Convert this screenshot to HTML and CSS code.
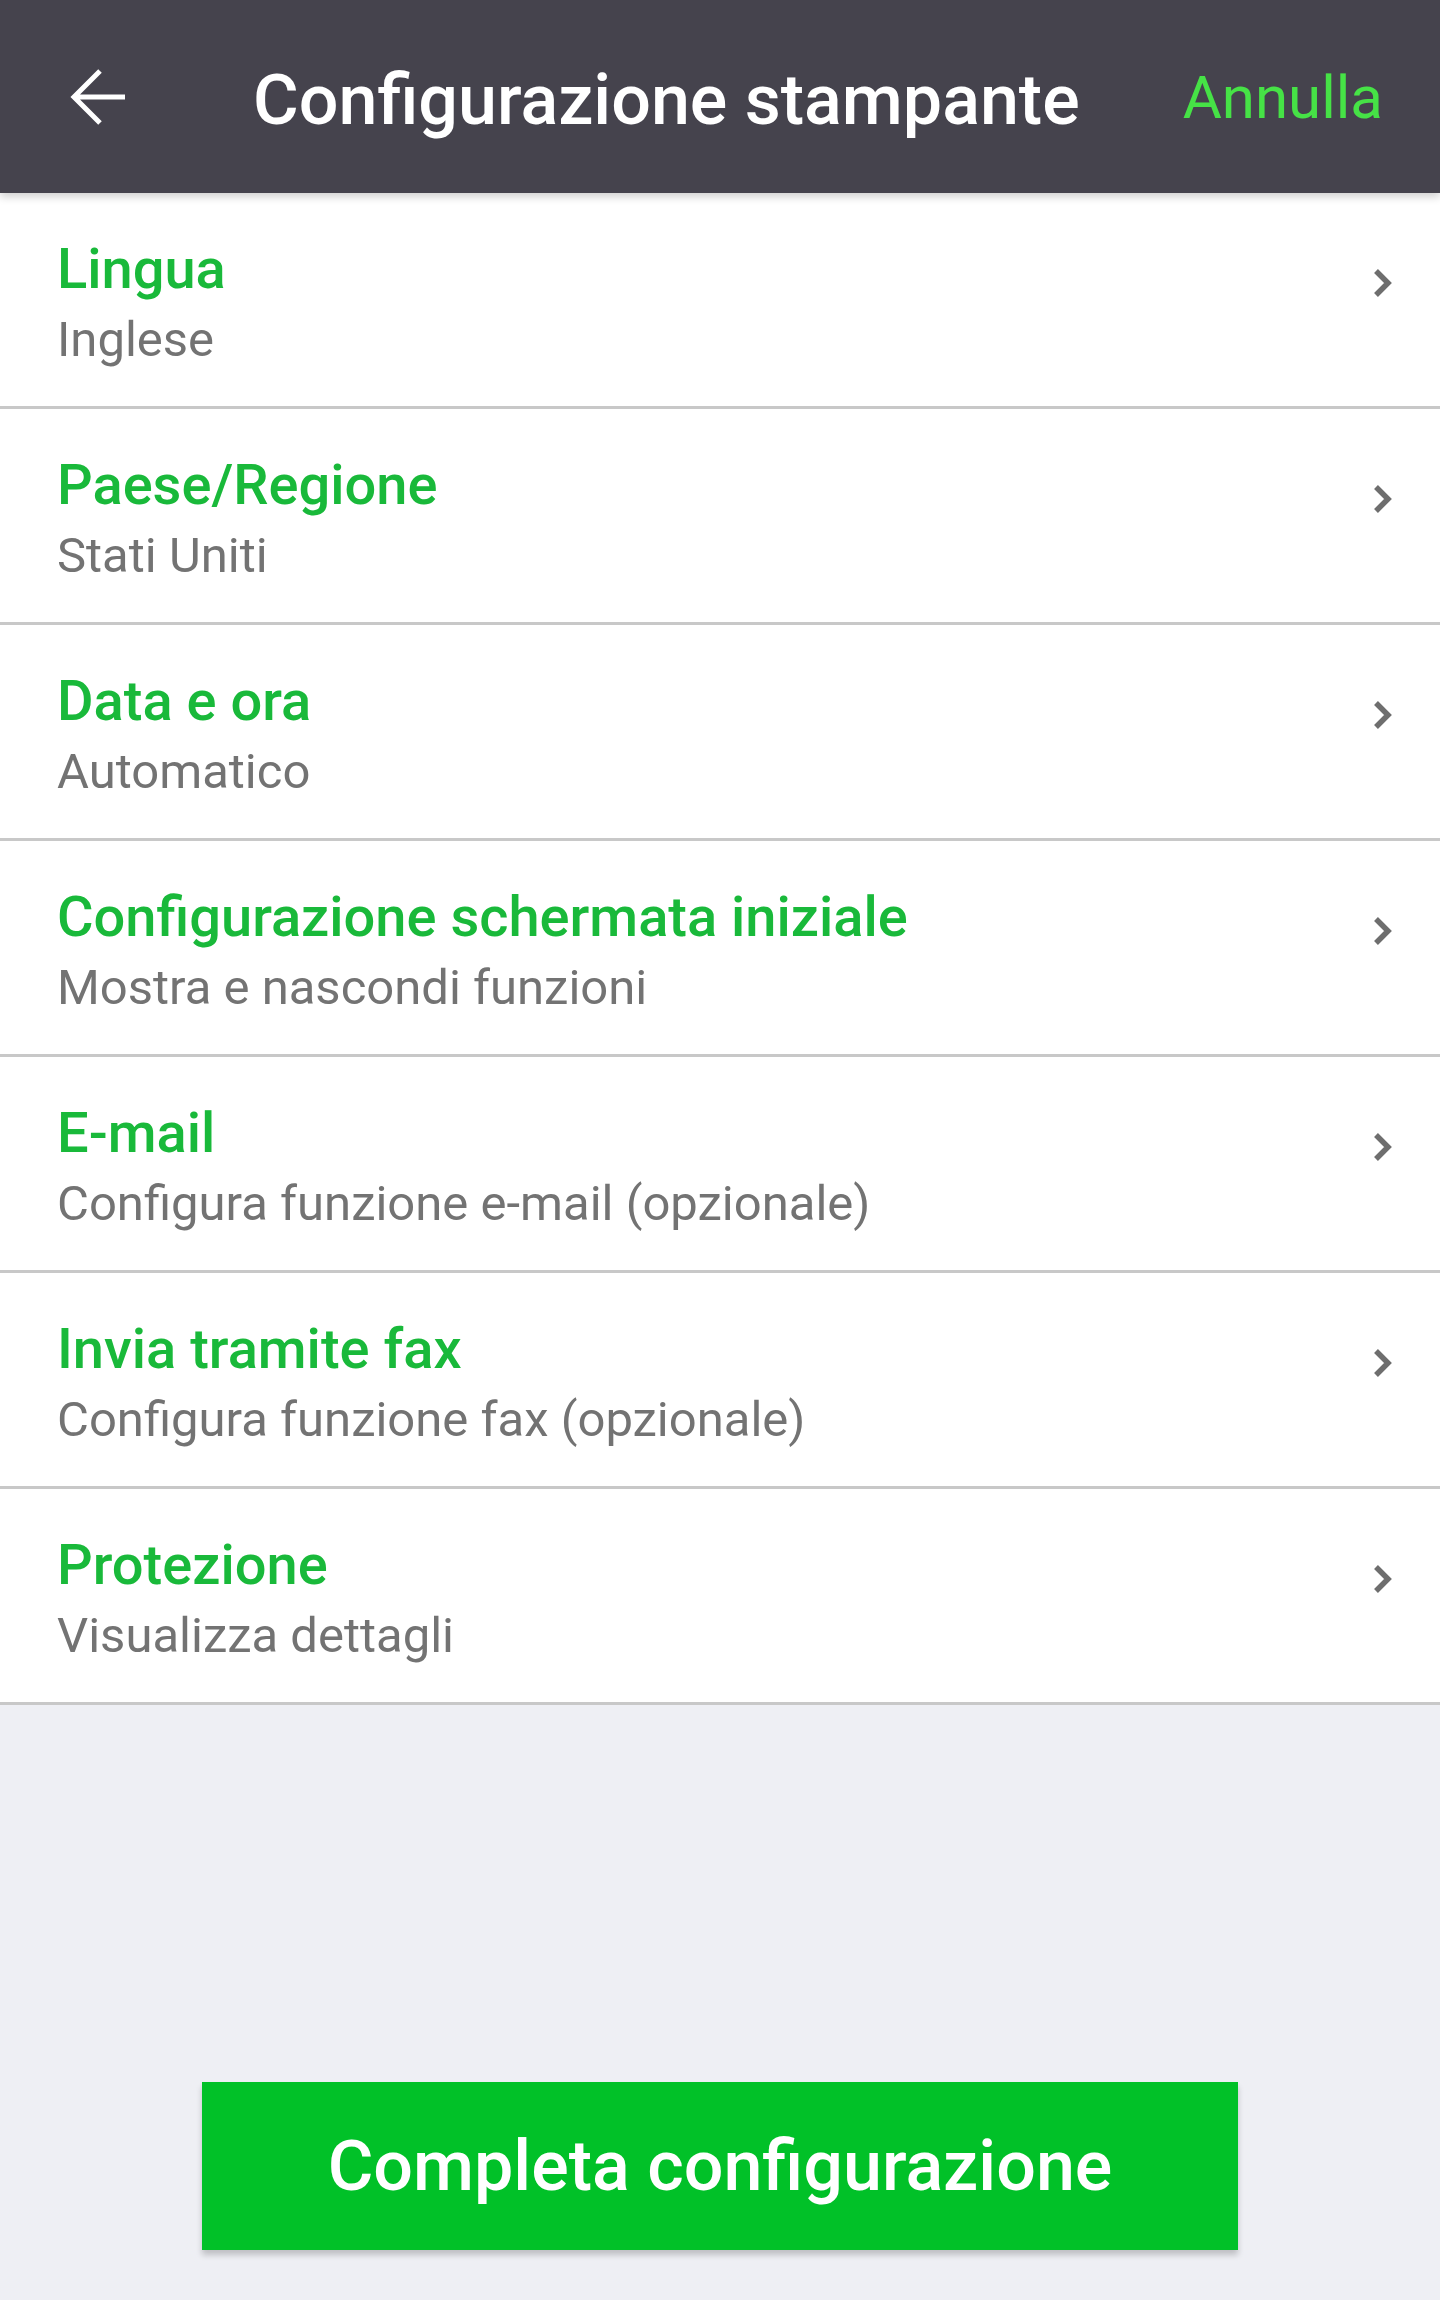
FILE: index.html
```html
<!DOCTYPE html>
<html lang="it">

<head>
    <meta charset="UTF-8">
    <meta name="viewport" content="width=device-width, initial-scale=1.0">
    <title>Configurazione stampante</title>
    <link rel="stylesheet" href="styles.css">
</head>

<body>
    <div class="page">
        <header class="topbar">
            <button class="back" type="button" aria-label="Indietro">
                <svg width="56" height="56" viewBox="0 0 56 56">
                    <path d="M55 28H4 M30 2 L4 28 L30 54" fill="none" stroke="#fff" stroke-width="5" />
                </svg>
            </button>
            <h1 class="title">Configurazione stampante</h1>
            <a class="cancel" href="#">Annulla</a>
        </header>

        <ul class="settings">
            <li class="item">
                <div class="text">
                    <div class="name">Lingua</div>
                    <div class="value">Inglese</div>
                </div>
                <svg class="chevron" width="22" height="32" viewBox="0 0 22 32">
                    <polyline points="4,3 16,15 4,27" fill="none" stroke="#6e6e6e" stroke-width="5.5" />
                </svg>
            </li>
            <li class="item">
                <div class="text">
                    <div class="name">Paese/Regione</div>
                    <div class="value">Stati Uniti</div>
                </div>
                <svg class="chevron" width="22" height="32" viewBox="0 0 22 32">
                    <polyline points="4,3 16,15 4,27" fill="none" stroke="#6e6e6e" stroke-width="5.5" />
                </svg>
            </li>
            <li class="item">
                <div class="text">
                    <div class="name">Data e ora</div>
                    <div class="value">Automatico</div>
                </div>
                <svg class="chevron" width="22" height="32" viewBox="0 0 22 32">
                    <polyline points="4,3 16,15 4,27" fill="none" stroke="#6e6e6e" stroke-width="5.5" />
                </svg>
            </li>
            <li class="item">
                <div class="text">
                    <div class="name">Configurazione schermata iniziale</div>
                    <div class="value">Mostra e nascondi funzioni</div>
                </div>
                <svg class="chevron" width="22" height="32" viewBox="0 0 22 32">
                    <polyline points="4,3 16,15 4,27" fill="none" stroke="#6e6e6e" stroke-width="5.5" />
                </svg>
            </li>
            <li class="item">
                <div class="text">
                    <div class="name">E-mail</div>
                    <div class="value">Configura funzione e-mail (opzionale)</div>
                </div>
                <svg class="chevron" width="22" height="32" viewBox="0 0 22 32">
                    <polyline points="4,3 16,15 4,27" fill="none" stroke="#6e6e6e" stroke-width="5.5" />
                </svg>
            </li>
            <li class="item">
                <div class="text">
                    <div class="name">Invia tramite fax</div>
                    <div class="value">Configura funzione fax (opzionale)</div>
                </div>
                <svg class="chevron" width="22" height="32" viewBox="0 0 22 32">
                    <polyline points="4,3 16,15 4,27" fill="none" stroke="#6e6e6e" stroke-width="5.5" />
                </svg>
            </li>
            <li class="item">
                <div class="text">
                    <div class="name">Protezione</div>
                    <div class="value">Visualizza dettagli</div>
                </div>
                <svg class="chevron" width="22" height="32" viewBox="0 0 22 32">
                    <polyline points="4,3 16,15 4,27" fill="none" stroke="#6e6e6e" stroke-width="5.5" />
                </svg>
            </li>
        </ul>

        <div class="footer">
            <button class="finish" type="button">Completa configurazione</button>
        </div>
    </div>
</body>

</html>
```

FILE: styles.css
```css
* {
    box-sizing: border-box;
}

body {
    margin: 0;
    font-family: Roboto, "Noto Sans", Arial, sans-serif;
    background-color: #eeeff4;
}

.page {
    display: flex;
    flex-direction: column;
    min-height: 2300px;
}

.topbar {
    display: flex;
    align-items: center;
    height: 193px;
    padding: 0 57px 0 70px;
    background-color: #45434d;
    box-shadow: 0 4px 8px rgba(0, 0, 0, 0.18);
    position: relative;
    z-index: 1;
}

.back {
    display: flex;
    padding: 0;
    border: none;
    background: none;
    cursor: pointer;
}

.title {
    flex: 1;
    margin: 0 0 0 127px;
    padding-top: 6px;
    color: #fff;
    font-size: 70px;
    font-weight: 500;
    white-space: nowrap;
}

.cancel {
    color: #46e246;
    font-size: 60px;
    text-decoration: none;
    padding-top: 2px;
}

.settings {
    list-style: none;
    margin: 0;
    padding: 0;
    background-color: #fff;
}

.item {
    display: flex;
    align-items: flex-start;
    padding: 42px 46px 29px 57px;
    border-bottom: 3px solid #c8c8c8;
    cursor: pointer;
}

.text {
    flex: 1;
}

.name {
    color: #19b93a;
    font-size: 56px;
    font-weight: 500;
    line-height: 68px;
}

.value {
    color: #737373;
    font-size: 49px;
    line-height: 74px;
}

.chevron {
    margin-top: 33px;
}

.footer {
    margin-top: auto;
    display: flex;
    justify-content: center;
    padding-bottom: 50px;
}

.finish {
    width: 1036px;
    height: 168px;
    border: none;
    background-color: #01c128;
    color: #fff;
    font-family: Roboto, "Noto Sans", Arial, sans-serif;
    font-size: 70px;
    font-weight: 500;
    box-shadow: 0 5px 6px rgba(0, 0, 0, 0.2);
    cursor: pointer;
}
```
